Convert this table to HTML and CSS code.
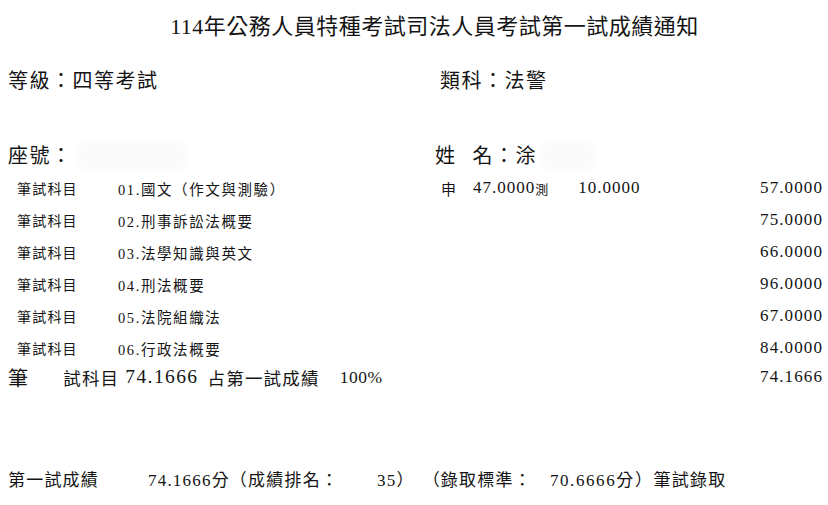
FILE: index.html
```html
<!DOCTYPE html>
<html lang="zh-Hant">
<head>
<meta charset="utf-8">
<title>成績通知</title>
<link rel="stylesheet" href="styles.css">
</head>
<body>
<div class="page">
  <div class="title">114年公務人員特種考試司法人員考試第一試成績通知</div>

  <div class="info info-top">
    <div class="info-cell">等級：四等考試</div>
    <div class="info-cell info-right">類科：法警</div>
  </div>

  <div class="info info-id">
    <div class="info-cell">座號：<span class="redact redact-id"></span></div>
    <div class="info-cell"><span class="name-label">姓</span>名：涂<span class="redact redact-name"></span></div>
  </div>

  <div class="subjects">
    <div class="subject">
      <span class="s-label">筆試科目</span>
      <span class="s-name">01.國文（作文與測驗）</span>
      <span class="s-detail"><span class="d-mark">申</span><span class="d-num">47.0000</span><span class="d-small">測</span><span class="d-num d-num2">10.0000</span></span>
      <span class="s-score">57.0000</span>
    </div>
    <div class="subject">
      <span class="s-label">筆試科目</span>
      <span class="s-name">02.刑事訴訟法概要</span>
      <span class="s-detail"></span>
      <span class="s-score">75.0000</span>
    </div>
    <div class="subject">
      <span class="s-label">筆試科目</span>
      <span class="s-name">03.法學知識與英文</span>
      <span class="s-detail"></span>
      <span class="s-score">66.0000</span>
    </div>
    <div class="subject">
      <span class="s-label">筆試科目</span>
      <span class="s-name">04.刑法概要</span>
      <span class="s-detail"></span>
      <span class="s-score">96.0000</span>
    </div>
    <div class="subject">
      <span class="s-label">筆試科目</span>
      <span class="s-name">05.法院組織法</span>
      <span class="s-detail"></span>
      <span class="s-score">67.0000</span>
    </div>
    <div class="subject">
      <span class="s-label">筆試科目</span>
      <span class="s-name">06.行政法概要</span>
      <span class="s-detail"></span>
      <span class="s-score">84.0000</span>
    </div>
  </div>

  <div class="total">
    <div class="total-left">
      <span class="t-mark">筆</span><span class="t-sub">試科目</span><span class="t-avg">74.1666</span><span class="t-text">占第一試成績</span><span class="t-pct">100%</span>
    </div>
    <span class="t-score">74.1666</span>
  </div>

  <div class="result">
    <span class="r-label">第一試成績</span><span class="r-score">74.1666分（成績排名：</span><span class="r-rank">35）</span><span class="r-std">（錄取標準：</span><span class="r-min">70.6666分）</span><span class="r-pass">筆試錄取</span>
  </div>
</div>
</body>
</html>
```

FILE: styles.css
```css
html, body {
  margin: 0;
  padding: 0;
  background: #ffffff;
}

body {
  width: 828px;
  height: 505px;
  overflow: hidden;
  font-family: "Liberation Serif", "Noto Sans CJK TC", serif;
  color: #141414;
}

.page {
  padding: 12px 5px 0 8px;
}

.title {
  height: 30px;
  line-height: 30px;
  font-size: 22px;
  letter-spacing: 0.5px;
  text-align: center;
  padding-left: 38px;
}

.info {
  display: grid;
  grid-template-columns: 427px 1fr;
  font-size: 20px;
  letter-spacing: 1.5px;
}

.info-top {
  margin-top: 27px;
  height: 24px;
  line-height: 24px;
}

.info-right {
  padding-left: 5px;
}

.info-id {
  margin-top: 48px;
  height: 24px;
  line-height: 24px;
}

.info-cell {
  display: flex;
  align-items: center;
  white-space: nowrap;
}

.name-label {
  margin-right: 16px;
}

.redact {
  display: inline-block;
  height: 30px;
  border-radius: 14px;
  background: #fafafa;
  filter: blur(3px);
}

.redact-id {
  width: 110px;
  margin-left: 4px;
}

.redact-name {
  width: 54px;
  margin-left: 4px;
}

.subjects {
  margin-top: 7px;
  display: flex;
  flex-direction: column;
}

.subject {
  display: grid;
  grid-template-columns: 110px 319px 1fr auto;
  height: 32px;
  align-items: center;
  white-space: nowrap;
}

.s-label {
  padding-left: 9px;
  font-size: 14px;
  letter-spacing: 1.2px;
}

.s-name {
  font-size: 14.5px;
  letter-spacing: 1.6px;
}

.s-detail {
  display: flex;
  align-items: center;
  font-size: 17px;
  letter-spacing: 1px;
}

.d-mark {
  font-size: 15px;
  margin-right: 16px;
  margin-left: 4px;
}

.d-small {
  font-size: 13px;
  letter-spacing: 0;
}

.d-num2 {
  margin-left: 30px;
}

.s-score {
  font-size: 17px;
  letter-spacing: 1.1px;
  text-align: right;
}

.total {
  display: flex;
  justify-content: space-between;
  align-items: center;
  height: 26px;
  white-space: nowrap;
}

.total-left {
  display: flex;
  align-items: center;
  font-size: 17.5px;
  letter-spacing: 1.2px;
}

.t-mark {
  font-size: 20px;
}

.t-sub {
  margin-left: 34px;
}

.t-avg {
  margin-left: 6px;
  font-size: 19.5px;
  letter-spacing: 1.4px;
}

.t-text {
  margin-left: 9px;
}

.t-pct {
  margin-left: 20px;
  font-size: 17.5px;
  letter-spacing: 0.5px;
}

.t-score {
  font-size: 17px;
  letter-spacing: 1.1px;
}

.result {
  margin-top: 76px;
  height: 24px;
  display: flex;
  align-items: center;
  white-space: nowrap;
  font-size: 17px;
  letter-spacing: 1.2px;
}

.r-score {
  margin-left: 49px;
}

.r-rank {
  margin-left: 38px;
}

.r-std {
  margin-left: 8px;
}

.r-min {
  margin-left: 18px;
  letter-spacing: 1.6px;
}

.r-pass {
  margin-left: 0;
}
```
